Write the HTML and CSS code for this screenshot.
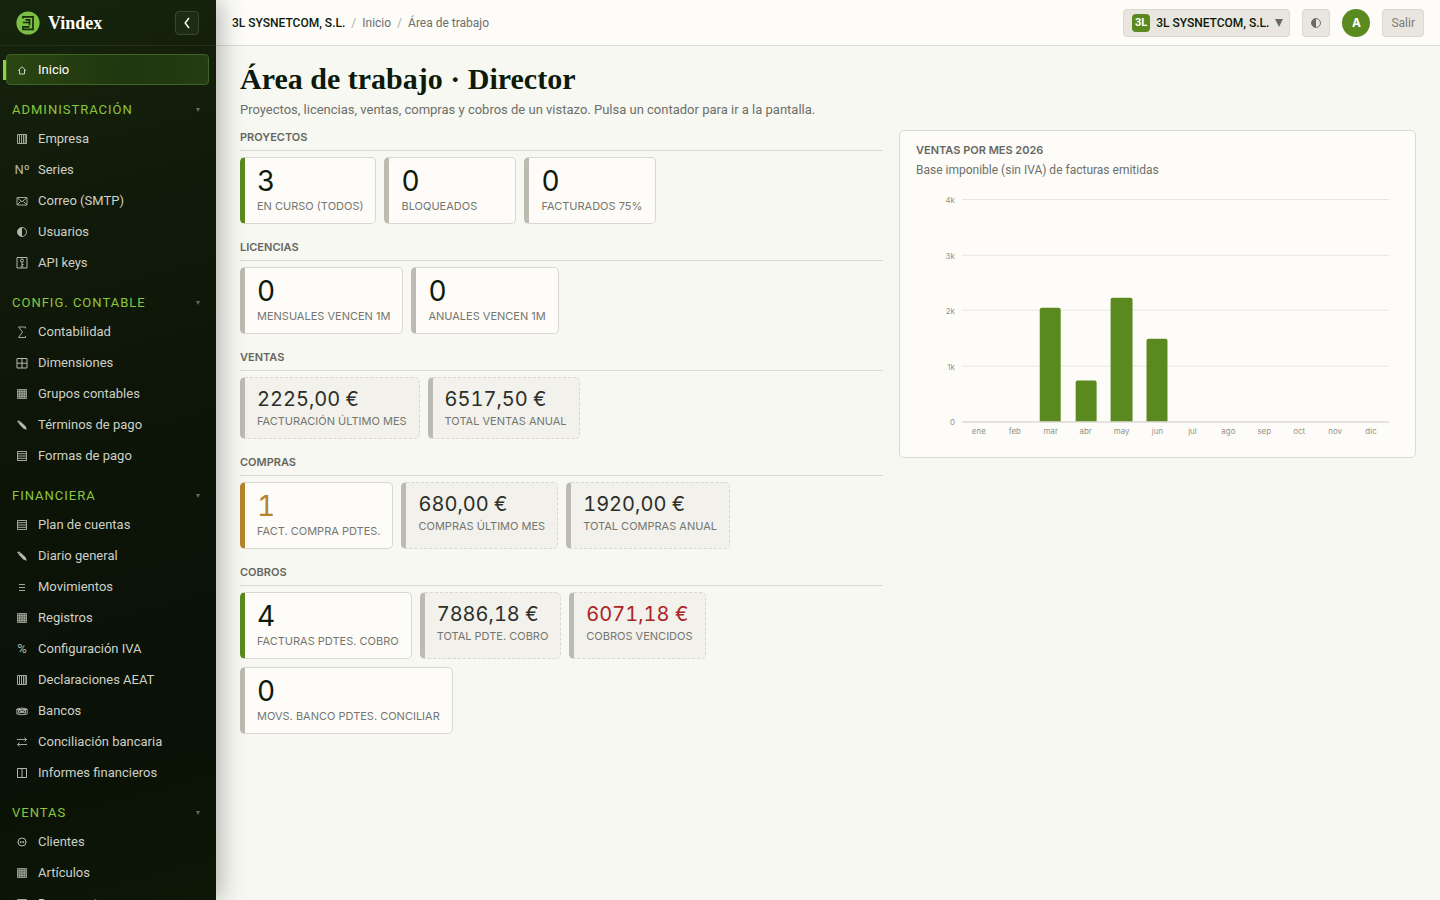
FILE: index.html
```html
<!DOCTYPE html>
<html lang="es">
<head>
<meta charset="utf-8">
<meta name="viewport" content="width=device-width, initial-scale=1">
<title>Vindex · Área de trabajo</title>
<link rel="stylesheet" href="styles.css">
</head>
<body>
<div class="app">
  <aside class="sidebar">
    <div class="brand">
      <svg class="brand-logo" viewBox="0 0 24 24" aria-hidden="true">
        <circle cx="12" cy="12" r="11.6" fill="#7bc043"/>
        <path d="M7 7.600V5.800h10v12.600H7v-2.600h6.500M7 11.500h6.500M9.500 8.800h4v5.500" fill="none" stroke="#16290b" stroke-width="1.7"/>
      </svg>
      <span class="brand-name">Vindex</span>
      <button class="collapse" type="button" aria-label="Contraer menú">
        <svg viewBox="0 0 10 14" aria-hidden="true"><path d="M7 2 3.200 7 7 12"/></svg>
      </button>
    </div>
    <nav class="nav" aria-label="Principal">
      <a class="item item-home" href="#"><svg class="icon"><use href="#i-home"/></svg>Inicio</a>

      <button class="group" type="button">Administración<span class="caret"></span></button>
      <a class="item" href="#"><svg class="icon"><use href="#i-cols"/></svg>Empresa</a>
      <a class="item" href="#"><span class="icon glyph">Nº</span>Series</a>
      <a class="item" href="#"><svg class="icon"><use href="#i-mail"/></svg>Correo (SMTP)</a>
      <a class="item" href="#"><svg class="icon"><use href="#i-half"/></svg>Usuarios</a>
      <a class="item" href="#"><svg class="icon"><use href="#i-key"/></svg>API keys</a>

      <button class="group" type="button">Config. contable<span class="caret"></span></button>
      <a class="item" href="#"><svg class="icon"><use href="#i-sum"/></svg>Contabilidad</a>
      <a class="item" href="#"><svg class="icon"><use href="#i-window"/></svg>Dimensiones</a>
      <a class="item" href="#"><svg class="icon"><use href="#i-grid"/></svg>Grupos contables</a>
      <a class="item" href="#"><svg class="icon"><use href="#i-pencil"/></svg>Términos de pago</a>
      <a class="item" href="#"><svg class="icon"><use href="#i-rows"/></svg>Formas de pago</a>

      <button class="group" type="button">Financiera<span class="caret"></span></button>
      <a class="item" href="#"><svg class="icon"><use href="#i-rows"/></svg>Plan de cuentas</a>
      <a class="item" href="#"><svg class="icon"><use href="#i-pencil"/></svg>Diario general</a>
      <a class="item" href="#"><svg class="icon"><use href="#i-lines"/></svg>Movimientos</a>
      <a class="item" href="#"><svg class="icon"><use href="#i-grid"/></svg>Registros</a>
      <a class="item" href="#"><span class="icon glyph">%</span>Configuración IVA</a>
      <a class="item" href="#"><svg class="icon"><use href="#i-cols"/></svg>Declaraciones AEAT</a>
      <a class="item" href="#"><svg class="icon"><use href="#i-bank"/></svg>Bancos</a>
      <a class="item" href="#"><svg class="icon"><use href="#i-swap"/></svg>Conciliación bancaria</a>
      <a class="item" href="#"><svg class="icon"><use href="#i-split"/></svg>Informes financieros</a>

      <button class="group" type="button">Ventas<span class="caret"></span></button>
      <a class="item" href="#"><svg class="icon"><use href="#i-face"/></svg>Clientes</a>
      <a class="item" href="#"><svg class="icon"><use href="#i-grid"/></svg>Artículos</a>
      <a class="item" href="#"><svg class="icon"><use href="#i-rows"/></svg>Documentos</a>
    </nav>
  </aside>

  <div class="page">
    <header class="topbar">
      <nav class="crumbs" aria-label="Ruta">
        <strong>3L SYSNETCOM, S.L.</strong><span class="sep">/</span><a href="#">Inicio</a><span class="sep">/</span><span>Área de trabajo</span>
      </nav>
      <button class="chip company" type="button"><span class="badge">3L</span><span>3L SYSNETCOM, S.L.</span><span class="down"></span></button>
      <button class="chip theme" type="button" aria-label="Cambiar tema"><svg class="icon"><use href="#i-half"/></svg></button>
      <span class="avatar">A</span>
      <button class="chip exit" type="button">Salir</button>
    </header>

    <main class="main">
      <h1>Área de trabajo · Director</h1>
      <p class="lead">Proyectos, licencias, ventas, compras y cobros de un vistazo. Pulsa un contador para ir a la pantalla.</p>
      <div class="columns">
        <div class="counters">
          <section>
            <h2>Proyectos</h2>
            <div class="cards">
              <a class="card green" href="#"><b>3</b><span>En curso (todos)</span></a>
              <a class="card" href="#"><b>0</b><span>Bloqueados</span></a>
              <a class="card" href="#"><b>0</b><span>Facturados 75%</span></a>
            </div>
          </section>
          <section>
            <h2>Licencias</h2>
            <div class="cards">
              <a class="card" href="#"><b>0</b><span>Mensuales vencen 1m</span></a>
              <a class="card" href="#"><b>0</b><span>Anuales vencen 1m</span></a>
            </div>
          </section>
          <section>
            <h2>Ventas</h2>
            <div class="cards">
              <div class="card total"><b>2225,00 €</b><span>Facturación último mes</span></div>
              <div class="card total"><b>6517,50 €</b><span>Total ventas anual</span></div>
            </div>
          </section>
          <section>
            <h2>Compras</h2>
            <div class="cards">
              <a class="card amber" href="#"><b>1</b><span>Fact. compra pdtes.</span></a>
              <div class="card total"><b>680,00 €</b><span>Compras último mes</span></div>
              <div class="card total"><b>1920,00 €</b><span>Total compras anual</span></div>
            </div>
          </section>
          <section>
            <h2>Cobros</h2>
            <div class="cards">
              <a class="card green" href="#"><b>4</b><span>Facturas pdtes. cobro</span></a>
              <div class="card total"><b>7886,18 €</b><span>Total pdte. cobro</span></div>
              <div class="card total overdue"><b>6071,18 €</b><span>Cobros vencidos</span></div>
              <a class="card" href="#"><b>0</b><span>Movs. banco pdtes. conciliar</span></a>
            </div>
          </section>
        </div>

        <section class="panel">
          <h2>Ventas por mes 2026</h2>
          <p>Base imponible (sin IVA) de facturas emitidas</p>
          <svg class="chart" viewBox="0 0 484 252" role="img" aria-label="Ventas por mes 2026">
            <g class="gridlines">
              <path d="M46 11.5H474M46 67.5H474M46 122.5H474M46 178.5H474"/>
            </g>
            <g class="bars">
              <path d="M124 234V122q0-2 2-2h17q2 0 2 2V234z"/>
              <path d="M160 234V195q0-2 2-2h17q2 0 2 2V234z"/>
              <path d="M195 234V112q0-2 2-2h18q2 0 2 2V234z"/>
              <path d="M231 234V153q0-2 2-2h17q2 0 2 2V234z"/>
            </g>
            <path class="axis" d="M46 234.500H474"/>
            <g class="ylabels">
              <text x="39" y="15">4k</text><text x="39" y="71">3k</text><text x="39" y="126">2k</text><text x="39" y="182">1k</text><text x="39" y="238">0</text>
            </g>
            <g class="xlabels">
              <text x="63" y="247">ene</text><text x="99" y="247">feb</text><text x="135" y="247">mar</text><text x="170" y="247">abr</text><text x="206" y="247">may</text><text x="242" y="247">jun</text><text x="277" y="247">jul</text><text x="313" y="247">ago</text><text x="349" y="247">sep</text><text x="384" y="247">oct</text><text x="420" y="247">nov</text><text x="456" y="247">dic</text>
            </g>
          </svg>
        </section>
      </div>
    </main>
  </div>
</div>

<svg class="sprite" aria-hidden="true">
  <defs>
    <symbol id="i-home" viewBox="0 0 16 16"><path d="M5.500 7.500v4.500h5V7.500M4.200 8.600 8 4.700l3.800 3.900" fill="none" stroke="currentColor" stroke-width=".9"/></symbol>
    <symbol id="i-cols" viewBox="0 0 16 16"><path d="M3.500 3.500h9v9h-9zM5.500 4v8M7.500 4v8M9.500 4v8M11.200 4v8" fill="none" stroke="currentColor" stroke-width=".9"/></symbol>
    <symbol id="i-rows" viewBox="0 0 16 16"><path d="M3.500 3.500h9v9h-9zM4 5.700h8M4 8h8M4 10.300h8" fill="none" stroke="currentColor" stroke-width=".9"/></symbol>
    <symbol id="i-grid" viewBox="0 0 16 16"><path d="M3.500 3.500h9v9h-9zM4 5.300h8M4 7.100h8M4 8.900h8M4 10.700h8M5.300 4v8M7.100 4v8M8.900 4v8M10.700 4v8" fill="none" stroke="currentColor" stroke-width=".8"/></symbol>
    <symbol id="i-window" viewBox="0 0 16 16"><path d="M3 3.500h10v9.500H3zM3 8.200h10M8 3.500V13" fill="none" stroke="currentColor"/></symbol>
    <symbol id="i-split" viewBox="0 0 16 16"><path d="M3.500 3.500h9v9h-9zM8 3.500v9" fill="none" stroke="currentColor"/></symbol>
    <symbol id="i-mail" viewBox="0 0 16 16"><path d="M3 4.500h10v7.500H3zM3.500 5 8 8.800 12.500 5M3.500 11.500l3-3M12.500 11.500l-3-3" fill="none" stroke="currentColor" stroke-width=".9"/></symbol>
    <symbol id="i-half" viewBox="0 0 16 16"><circle cx="8" cy="8" r="4.500" fill="none" stroke="currentColor" stroke-width=".9"/><path d="M8 3.500a4.500 4.500 0 0 0 0 9z" fill="currentColor"/></symbol>
    <symbol id="i-key" viewBox="0 0 16 16"><path d="M3 2.500h10v10.500H3zM8 6.800v5M8 9.500h1.500M6.700 11.800h2.600" fill="none" stroke="currentColor"/><circle cx="8" cy="5.500" r="1.500" fill="none" stroke="currentColor"/></symbol>
    <symbol id="i-sum" viewBox="0 0 16 16"><path d="M11.500 4.500v-1.500h-7L8.500 8l-4 5.500h7V12" fill="none" stroke="currentColor" stroke-width=".9"/></symbol>
    <symbol id="i-pencil" viewBox="0 0 16 16"><path d="M3.400 4.200q.8-1.300 2-.5l.8.700-1.700 1.700-.8-.9q-.4-.5-.3-1zM6.500 4.600l5.300 4.900 1 3.200-3.200-.9-5-5.300z" fill="currentColor"/></symbol>
    <symbol id="i-lines" viewBox="0 0 16 16"><path d="M5 5.500h6M5 8.500h6M5 11.500h6" fill="none" stroke="currentColor" stroke-width=".9"/></symbol>
    <symbol id="i-bank" viewBox="0 0 16 16"><path d="M2.800 6q5.200-2 10.400 0v5q-5.200 1.600-10.400 0zM4.500 7.500h1.800v2.500H4.500zM9.700 7.500h1.800V10H9.700zM3 6.500h10" fill="none" stroke="currentColor" stroke-width=".9"/><circle cx="8" cy="8.700" r="1.300" fill="currentColor"/></symbol>
    <symbol id="i-swap" viewBox="0 0 16 16"><path d="M3 5.500h9.500M10.500 3.500l2 2-2 2M13 10.500H3.500M5.500 8.500l-2 2 2 2" fill="none" stroke="currentColor" stroke-width=".9"/></symbol>
    <symbol id="i-face" viewBox="0 0 16 16"><circle cx="8" cy="8" r="4" fill="none" stroke="currentColor"/><path d="M6 7.500h1.300v1.300H6zM8.700 7.500H10v1.300H8.700zM3 8h1.200M11.800 8H13" fill="currentColor" stroke="currentColor" stroke-width=".4"/></symbol>
  </defs>
</svg>
</body>
</html>
```
FILE: styles.css
```css
* { box-sizing: border-box; }

body {
  margin: 0;
  background: #f7f8f2;
  color: #0d1a09;
  font-family: Roboto, Inter, sans-serif;
  font-size: 13px;
  line-height: 20px;
}

button { font: inherit; color: inherit; cursor: pointer; }
a { color: inherit; text-decoration: none; }
h1, h2, p { margin: 0; }
.sprite { display: none; }

.app { display: flex; height: 100vh; overflow: hidden; }

/* Sidebar */
.sidebar {
  position: relative;
  z-index: 1;
  flex: none;
  width: 216px;
  overflow: hidden;
  background: linear-gradient(165deg, #16240d 0%, #111b0a 20%, #0d1508 45%, #0a1107 80%, #0c1706 100%);
  box-shadow: 3px 0 24px rgba(13, 26, 9, .34);
  color: #cdd0c6;
}
.brand {
  display: flex;
  align-items: center;
  gap: 8px;
  height: 46px;
  padding: 0 17px 0 16px;
  border-bottom: 1px solid #24301c;
}
.brand-logo { width: 24px; height: 24px; }
.brand-name {
  flex: 1;
  color: #fff;
  font-family: "Liberation Serif", serif;
  font-size: 18px;
  font-weight: 700;
}
.collapse {
  display: grid;
  place-items: center;
  width: 24px;
  height: 24px;
  padding: 0;
  border: 1px solid #3b4632;
  border-radius: 4px;
  background: #1d2a14;
}
.collapse svg { width: 10px; height: 14px; fill: none; stroke: #fff; stroke-width: 1.5; }

.nav { display: flex; flex-direction: column; padding: 8px 7px 0 6px; }
.item {
  display: flex;
  align-items: center;
  gap: 8px;
  flex: none;
  height: 31px;
  padding: 0 8px;
}
.icon { flex: none; width: 16px; height: 16px; color: #b5b9ad; }
.glyph { font-size: 13px; line-height: 16px; text-align: center; white-space: nowrap; }
.item-home {
  position: relative;
  padding: 0 7px;
  border: 1px solid #3d6420;
  border-radius: 4px;
  background: linear-gradient(100deg, #2a4612, #20360f 60%, #243d11);
  color: #fff;
}
.item-home .icon { color: #dfe4d8; }
.item-home::before {
  content: "";
  position: absolute;
  left: -4px;
  top: 5px;
  width: 3px;
  height: 20px;
  background: #8fd14f;
}
.group {
  display: flex;
  align-items: center;
  justify-content: space-between;
  flex: none;
  height: 21px;
  margin: 14px 0 3px;
  padding: 0 9px 0 6px;
  border: 0;
  background: none;
  color: #8cc63f;
  letter-spacing: 1px;
  text-transform: uppercase;
}
.caret, .down { border: solid transparent; border-width: 4px 2px 0; border-top-color: #5f7350; }

/* Top bar */
.page { flex: 1; min-width: 0; }
.topbar {
  display: flex;
  align-items: center;
  gap: 12px;
  height: 46px;
  padding: 0 16px;
  border-bottom: 1px solid #dcddd5;
  background: #fdfcf9;
  font-size: 12px;
}
.crumbs { display: flex; gap: 6px; flex: 1; color: #6d6f69; }
.crumbs strong { color: #0d1a09; font-weight: 500; }
.sep { color: #b0b1aa; }
.chip {
  display: flex;
  align-items: center;
  justify-content: center;
  height: 28px;
  border: 1px solid #d9d7cf;
  border-radius: 4px;
  background: #e8e6df;
}
.company { gap: 6px; padding: 0 6px 0 8px; font-weight: 500; }
.badge {
  width: 18px;
  height: 18px;
  border-radius: 4px;
  background: #5a8a1f;
  color: #fff;
  font-size: 11px;
  font-weight: 700;
  line-height: 18px;
}
.down { border-width: 8px 4px 0; border-top-color: #686a64; }
.theme { width: 28px; padding: 0; }
.theme .icon { color: #686a64; }
.avatar {
  width: 28px;
  height: 28px;
  border-radius: 50%;
  background: #5a8a1f;
  color: #fff;
  font-family: Inter, sans-serif;
  font-weight: 700;
  line-height: 28px;
  text-align: center;
}
.exit { padding: 0 8px; color: #7b7d77; }

/* Content */
.main { padding: 16px 24px; }
h1 {
  font-family: "Liberation Serif", serif;
  font-size: 30px;
  font-weight: 700;
  line-height: 34px;
}
.lead { margin-top: 4px; color: #6d6f69; }
.columns { display: grid; grid-template-columns: 643fr 517fr; gap: 16px; align-items: start; margin-top: 10px; }
.counters { display: flex; flex-direction: column; gap: 16px; }
h2 {
  color: #65675f;
  font-family: Inter, sans-serif;
  font-size: 11px;
  font-weight: 600;
  line-height: 14px;
  text-transform: uppercase;
}
.counters h2 { padding-bottom: 6px; border-bottom: 1px solid #d9dbd2; }
.cards { display: flex; flex-wrap: wrap; gap: 8px; margin-top: 6px; }
.card {
  display: flex;
  flex-direction: column;
  min-width: 132px;
  padding: 8px 12px 7px;
  border: 1px solid #d9d7cf;
  border-left: 5px solid #bdbab1;
  border-radius: 5px;
  background: #fdfcf9;
  font-family: Inter, sans-serif;
}
.card b { font-size: 28px; font-weight: 400; line-height: 31px; font-variant-numeric: tabular-nums; }
.card span { color: #74766f; font-size: 11px; line-height: 19px; text-transform: uppercase; }
.card.green { border-left-color: #5a8a1f; }
.card.amber { border-left-color: #b5842b; }
.card.amber b { color: #b5842b; }
.card.total { border-style: dashed; border-left-style: solid; background: #f2f1ec; }
.card.total b { color: #2c2f29; font-size: 20px; line-height: 26px; }
.card.overdue b { color: #ab2424; }

.panel {
  padding: 12px 16px 18px;
  border: 1px solid #d9dbd2;
  border-radius: 5px;
  background: #fdfcf9;
}
.panel p { margin-top: 3px; color: #6d6f69; font-size: 12px; }
.chart { display: block; width: 100%; margin-top: 8px; }
.gridlines { stroke: #e6e6e0; }
.axis { stroke: #cbcbc4; }
.bars { fill: #5a8a1f; }
.chart text { fill: #92948d; font-family: Inter, sans-serif; font-size: 8px; }
.ylabels { text-anchor: end; }
.xlabels { text-anchor: middle; }
```
